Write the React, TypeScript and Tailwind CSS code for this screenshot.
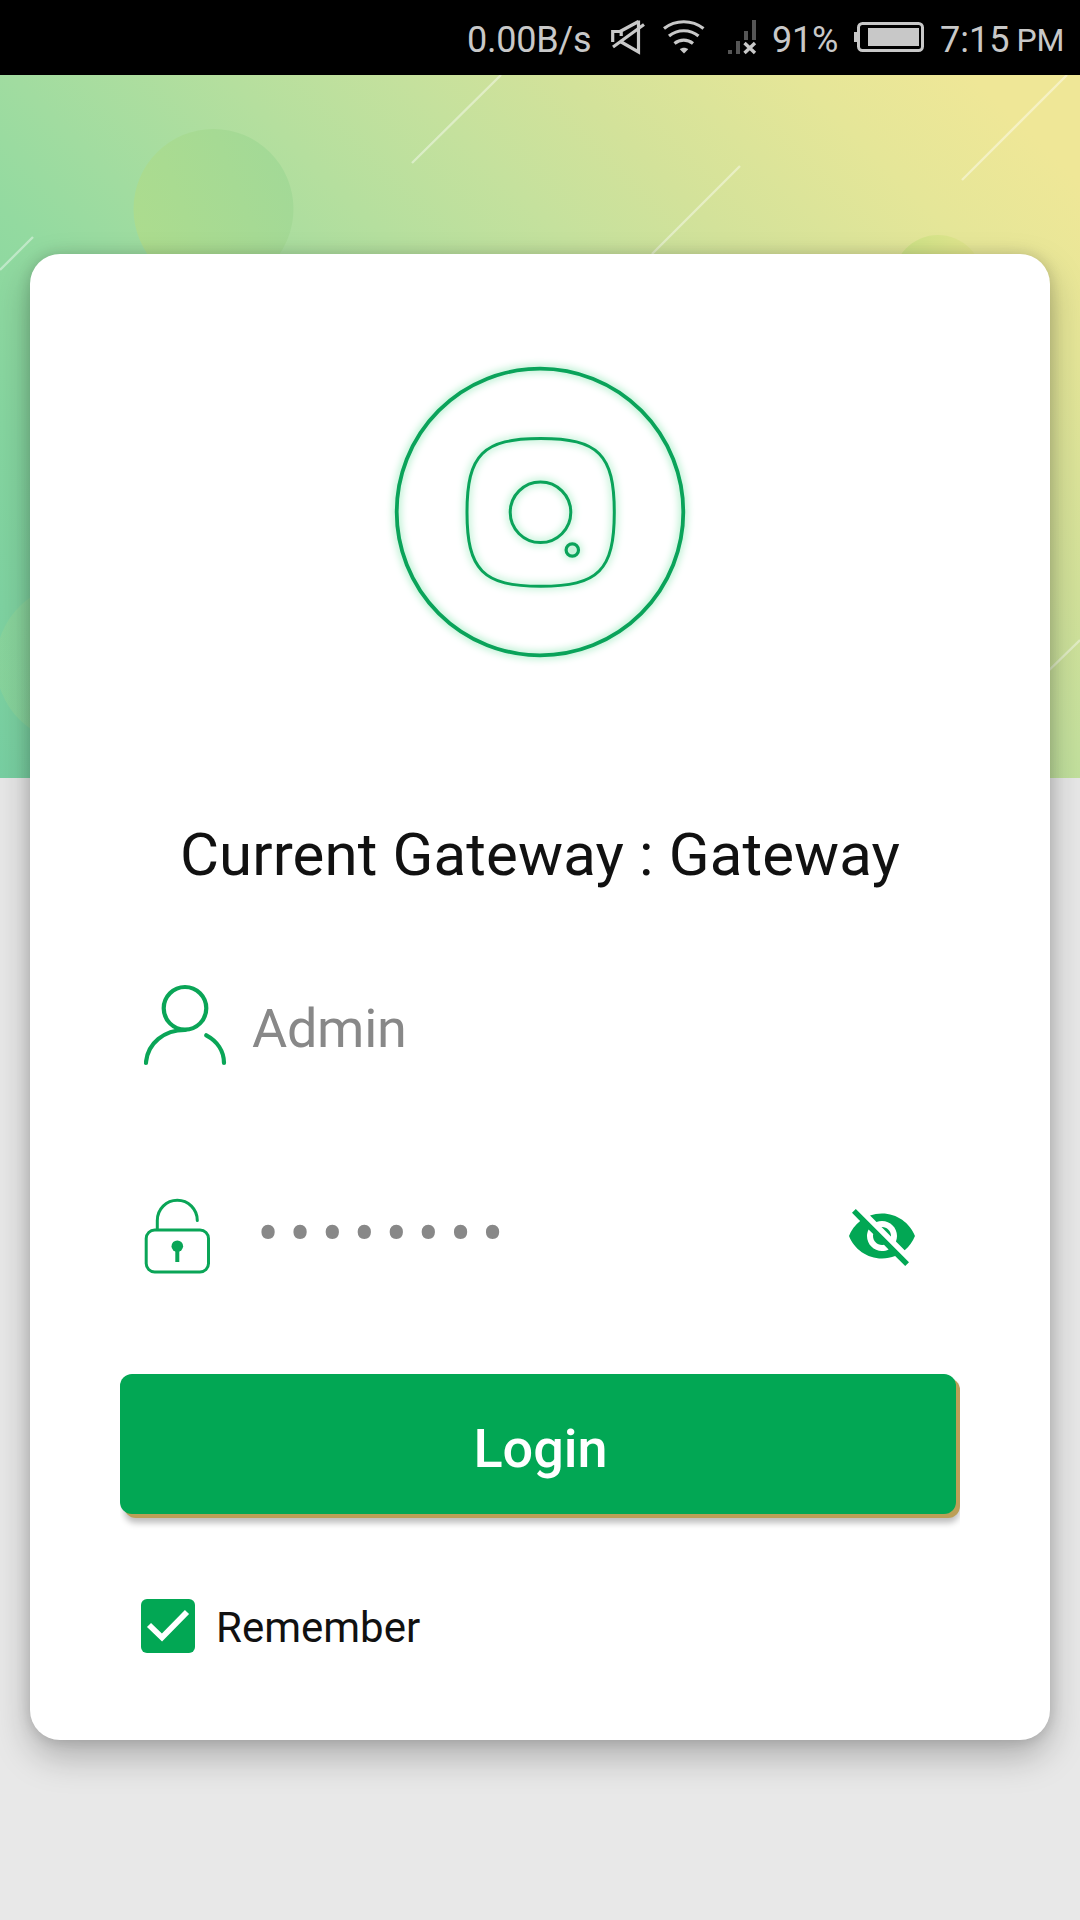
import { MdVisibilityOff } from "react-icons/md";

function StatusBar() {
  return (
    <div className="h-[75px] bg-black text-[#c8c8c8] text-4xl leading-[42px] flex items-start pt-[18px] pl-[467px] whitespace-nowrap">
      <span className="w-[143px] mt-px tracking-[-0.25px]">0.00B/s</span>
      <svg className="w-[50px] h-10" viewBox="0 0 50 40" fill="none" stroke="currentColor" strokeWidth="3.2">
        <path d="M2.7 24V13.5H11.2V18M10 13.5L28.5 3.5M3 29L34 6.5M28.5 2.5V34L9.5 23" />
      </svg>
      <svg className="w-[66px] h-10" viewBox="0 0 66 40" fill="none" stroke="currentColor" strokeWidth="3.2">
        <path d="M4 10.5C15.5 1.5 32 1.5 43.5 10.5M9 18C17.5 11 30 11 38.5 18M14.5 25.5C20 21 27.5 21 33 25.5" />
        <path d="M24 35.5L19.8 31.2C22 29.2 26 29.2 28.2 31.2Z" fill="currentColor" stroke="none" />
      </svg>
      <svg className="w-[46px] h-10" viewBox="0 0 46 40">
        <path d="M2 32h4v4H2zM10 23h4v13h-4zM18 13h4v9h-4zM26 2h4v20h-4z" fill="#555" />
        <path d="M18.5 25L29 35M29 25L18.5 35" stroke="currentColor" strokeWidth="3.4" />
      </svg>
      <span className="w-[82px] mt-px tracking-[-0.2px]">91%</span>
      <svg className="w-[86px] h-10" viewBox="0 0 86 40" fill="none">
        <rect x="4.5" y="5.5" width="64" height="27" rx="4" stroke="currentColor" strokeWidth="3" />
        <path d="M0 14h4v10H0zM14 10h51v18H14z" fill="currentColor" />
      </svg>
      <span className="mt-px">7:15</span>
      <span className="mt-px ml-[7px] text-[32px]">PM</span>
    </div>
  );
}

function Banner() {
  return (
    <svg className="block w-full h-[703px]" viewBox="0 75 1080 703" fill="none">
      <circle cx="213.5" cy="209" r="80" fill="url(#bubble)" />
      <circle cx="938" cy="280" r="45" fill="url(#sun)" />
      <circle cx="76" cy="663" r="80" fill="url(#bubble)" fillOpacity="0.25" />
      <path
        d="M501 75L412 163M33 237L0 270M740 166L652 254M1067 75L962 180M1080 640L1040 679"
        stroke="#fff"
        strokeOpacity="0.42"
        strokeWidth="2.4"
      />
      <defs>
        <linearGradient id="bubble" x1="0" y1="0.7" x2="1" y2="0.3">
          <stop stopColor="#acdc8e" />
          <stop offset="1" stopColor="#a3d997" />
        </linearGradient>
        <linearGradient id="sun">
          <stop stopColor="#cbe286" />
          <stop offset="1" stopColor="#e4e58e" />
        </linearGradient>
      </defs>
    </svg>
  );
}

function Logo() {
  return (
    <svg
      className="w-[320px] h-[320px] drop-shadow-[0_0_4px_#6fe0a0]"
      viewBox="-160 -160 320 320"
      fill="none"
      stroke="#0aa35a"
      strokeWidth="3"
    >
      <circle r="143.3" strokeWidth="3.8" />
      <path d="M.7 -73.5C58.5 -73.5 74.3 -57.5 74.3 .3S58.5 74.3 .7 74.3S-73 58 -73 .3S-57 -73.5 .7 -73.5Z" />
      <circle cx=".5" cy=".3" r="30.3" />
      <circle cx="32.3" cy="38" r="6.2" strokeWidth="3.2" />
    </svg>
  );
}

function UserIcon() {
  return (
    <svg className="w-[108px] h-[84px]" viewBox="144 984 108 84" fill="none" stroke="#0aa557" strokeWidth="4.2" strokeLinecap="round">
      <circle cx="185" cy="1008.3" r="21.3" />
      <path d="M146 1063V1062C148 1043 164 1030 185 1030M206.3 1035.3C217 1041 224 1051 224 1063" />
    </svg>
  );
}

function LockIcon() {
  return (
    <svg className="w-[113px] h-[78px]" viewBox="144 1198 113 78" fill="none" stroke="#0aa557" strokeWidth="3" strokeLinecap="round">
      <rect x="146.2" y="1230" width="62.3" height="42" rx="8.5" />
      <path d="M157.3 1229V1220.5A20 20.3 0 0 1 197.3 1220.5" />
      <circle cx="177.3" cy="1246.2" r="5.8" fill="#0aa557" stroke="none" />
      <path d="M177.3 1248V1262" strokeWidth="4" strokeLinecap="butt" />
    </svg>
  );
}

function App() {
  return (
    <div className="w-[1080px] h-[1920px] overflow-hidden bg-[#e8e8e8] font-['Roboto',sans-serif]">
      <StatusBar />
      <div className="h-[703px] bg-[linear-gradient(45deg,#78d0a2_0%,#86d6a0_20%,#93daa0_32%,#a1dca0_40%,#b5df9e_52%,#c5e19d_62%,#d3e29a_71%,#e5e698_84%,#efe797_94%)]">
        <Banner />
      </div>
      <div className="relative -mt-[524px] mx-[30px] h-[1486px] rounded-[30px] bg-white shadow-[0_16px_36px_rgba(0,0,0,0.26),0_0_14px_rgba(0,0,0,0.15)] flex flex-col">
        <div className="pt-[98px] flex justify-center">
          <Logo />
        </div>
        <h1 className="mt-[148px] text-center text-[60px] leading-[70px] tracking-[0.12px] text-[#111]">Current Gateway : Gateway</h1>
        <div className="mt-[94px] pl-[114px] flex items-center">
          <UserIcon />
          <span className="pt-[5px] text-[54px] leading-[79px] tracking-[-0.3px] text-[#888]">Admin</span>
        </div>
        <div className="mt-[130px] pl-[114px] h-[78px] flex items-center">
          <LockIcon />
          <span className="flex-1 pb-1 text-[66px] leading-[78px] tracking-[9.8px] text-[#888]">••••••••</span>
          <MdVisibilityOff className="mr-[132px] mb-[2px] size-[72px] text-[#02a754]" />
        </div>
        <div className="mt-[98px] mx-[90px] h-[164px] overflow-hidden">
          <button className="block w-[836px] h-[140px] rounded-xl bg-[#02a754] text-[54px] font-medium text-white pl-[5px] pt-2 shadow-[4px_4px_0_#bc9f57,4px_9px_6px_rgba(0,0,0,0.26)]">
            Login
          </button>
        </div>
        <div className="mt-[61px] ml-[111px] flex items-center">
          <svg className="size-[54px]" viewBox="0 0 54 54" fill="none">
            <rect width="54" height="54" rx="6" fill="#02a754" />
            <path d="M8 26L21 38.5L46 13" stroke="#fff" strokeWidth="5.8" />
          </svg>
          <span className="ml-[21px] pt-1 text-[42px] leading-[50px] text-[#111]">Remember</span>
        </div>
      </div>
    </div>
  );
}

export default App;
